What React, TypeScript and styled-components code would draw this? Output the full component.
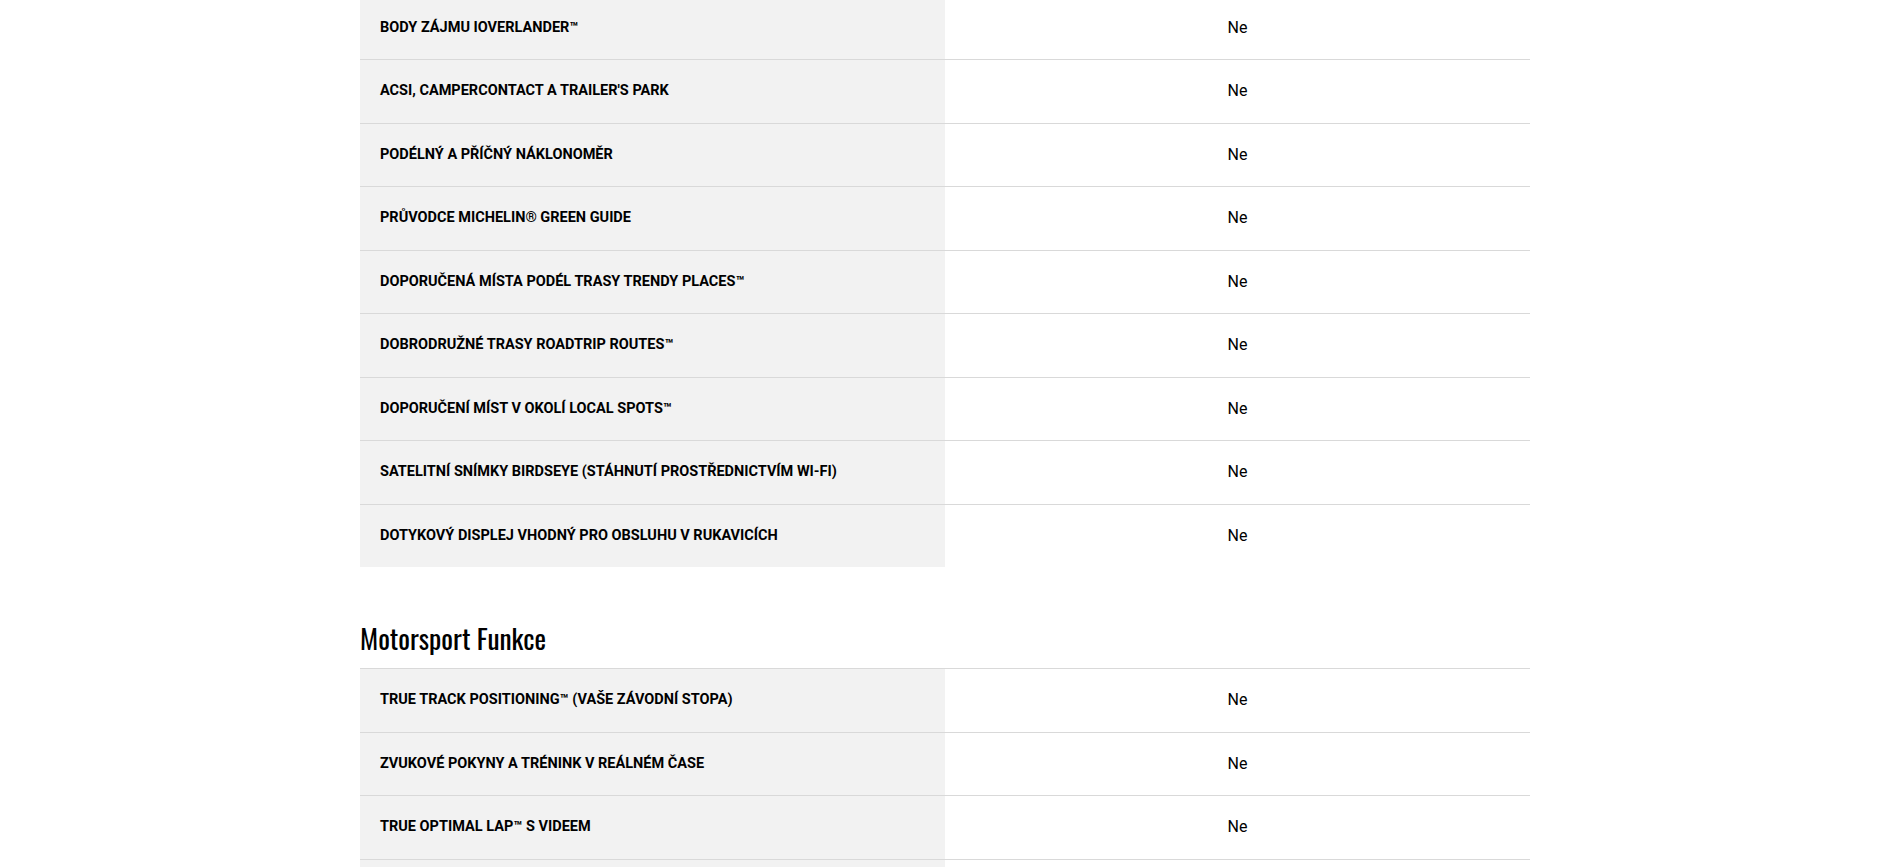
import React from 'react';
import styled, { createGlobalStyle } from 'styled-components';

const GlobalStyle = createGlobalStyle`
  body {
    margin: 0;
    background: #ffffff;
    font-family: Roboto, 'Liberation Sans', Arial, sans-serif;
    color: #000000;
  }
`;

const Page = styled.div`
  max-width: 1170px;
  margin: -4.5px auto 0;
`;

const SectionTitle = styled.h2`
  margin: 0;
  padding: 57px 0 16px;
  font-family: Oswald, 'Liberation Sans Narrow', 'DejaVu Sans Condensed', sans-serif;
  font-weight: 400;
  font-size: 27.5px;
  line-height: 28px;
  color: #000000;
`;

const Table = styled.div`
  display: flex;
  flex-direction: column;
`;

const Row = styled.div`
  display: grid;
  grid-template-columns: 1fr 1fr;
  border-top: 1px solid #d9d9d9;
`;

const Label = styled.div`
  background: #f2f2f2;
  padding: 20px;
  font-size: 14.5px;
  line-height: 22.5px;
  font-weight: 700;
  text-transform: uppercase;
`;

const Value = styled.div`
  padding: 20px;
  font-size: 16px;
  line-height: 22.5px;
  font-weight: 400;
  text-align: center;
`;

const features = [
  'Body zájmu iOverlander™',
  "ACSI, CamperContact a Trailer's Park",
  'Podélný a příčný náklonoměr',
  'Průvodce Michelin® Green Guide',
  'Doporučená místa podél trasy Trendy Places™',
  'Dobrodružné trasy Roadtrip Routes™',
  'Doporučení míst v okolí Local Spots™',
  'Satelitní snímky BirdsEye (stáhnutí prostřednictvím Wi-Fi)',
  'Dotykový displej vhodný pro obsluhu v rukavicích',
];

const motorsport = [
  'True Track Positioning™ (vaše závodní stopa)',
  'Zvukové pokyny a trénink v reálném čase',
  'True Optimal Lap™ s videem',
  'Automatická detekce okruhu',
];

function SpecTable({ rows }: { rows: string[] }) {
  return (
    <Table>
      {rows.map((r) => (
        <Row key={r}>
          <Label>{r}</Label>
          <Value>Ne</Value>
        </Row>
      ))}
    </Table>
  );
}

export default function App() {
  return (
    <>
      <GlobalStyle />
      <Page>
        <SpecTable rows={features} />
        <SectionTitle>Motorsport Funkce</SectionTitle>
        <SpecTable rows={motorsport} />
      </Page>
    </>
  );
}
